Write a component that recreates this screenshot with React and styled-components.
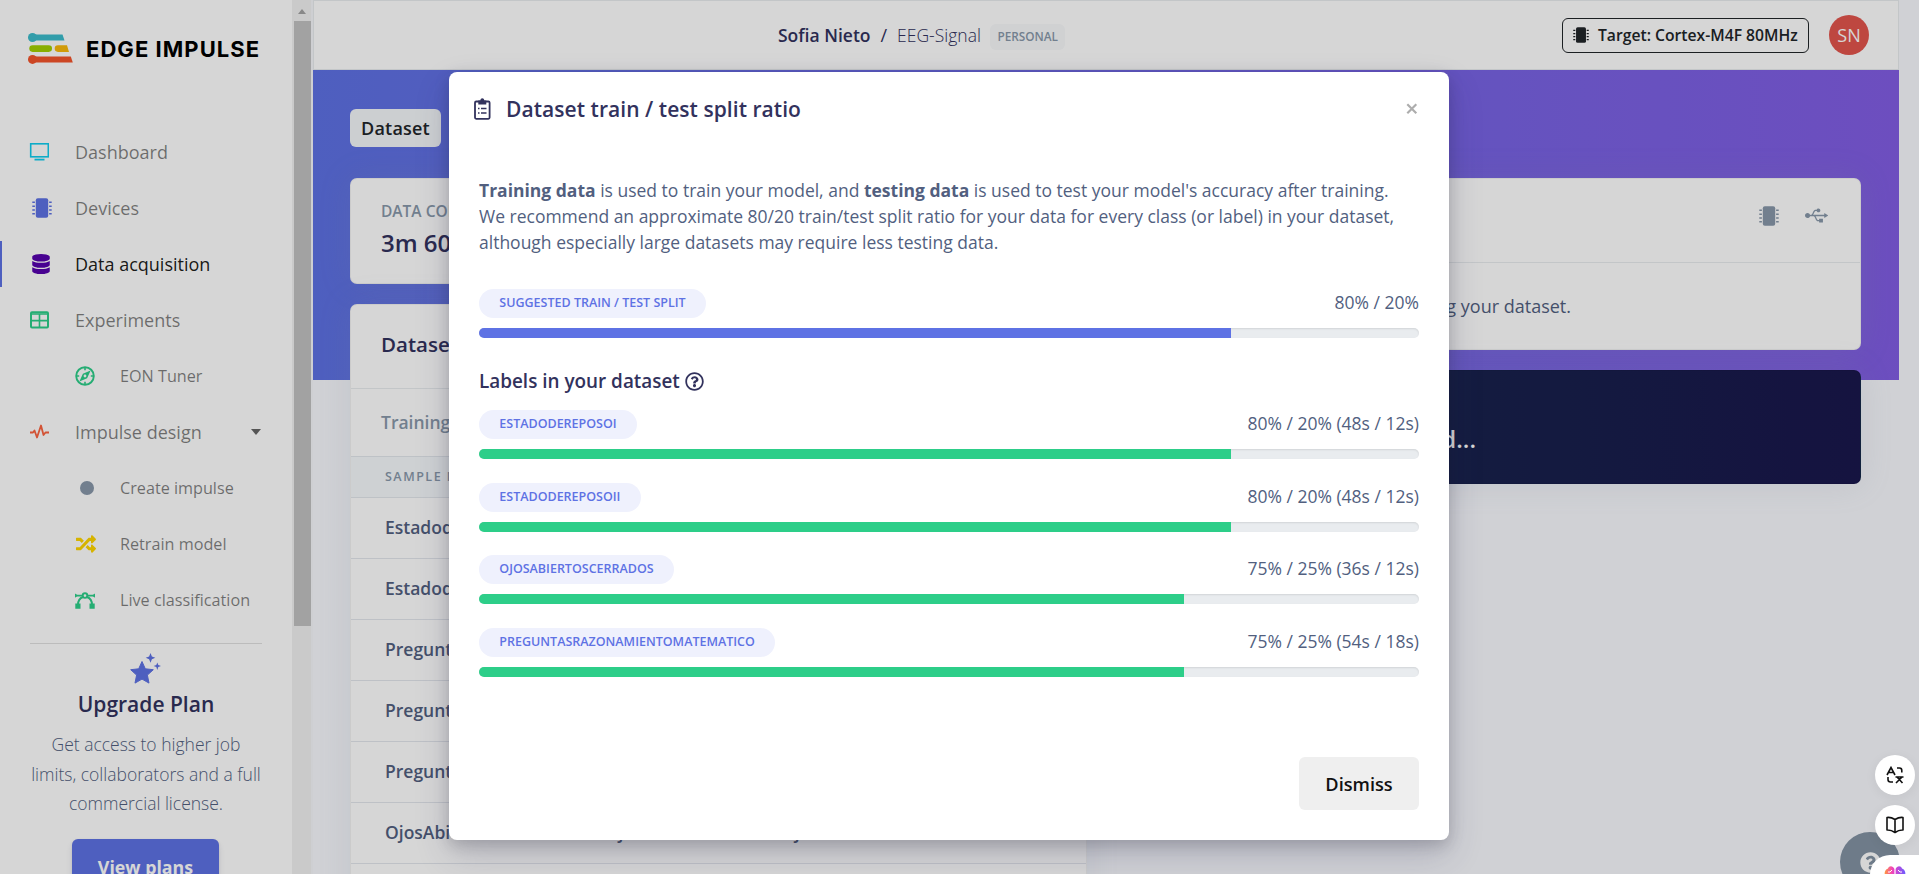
import React from "react";
import styled, { createGlobalStyle } from "styled-components";
import { FaDatabase, FaRandom, FaUsb, FaRegQuestionCircle, FaQuestionCircle } from "react-icons/fa";

const Global = createGlobalStyle`
  *, *::before, *::after { box-sizing: border-box; }
  body { margin: 0; overflow: hidden; background: #f8f9fe; font-family: "Open Sans", "Noto Sans", sans-serif; font-size: 18px; color: #525f7f; }
  svg { display: block; flex: none; }
`;

const Page = styled.div`
  position: relative;
  display: flex;
  height: 874px;
  overflow: hidden;
  white-space: nowrap;
`;

/* ---------- sidebar ---------- */
const Sidebar = styled.aside`
  width: 292px;
  height: 874px;
  background: #fff;
  display: flex;
  flex-direction: column;
  overflow: hidden;
  flex: none;
`;
const Brand = styled.div`
  display: flex;
  align-items: center;
  height: 97px;
  flex: none;
  padding: 0 0 0 28px;
  gap: 13px;
`;
const BrandName = styled.span`
  font-family: Inter, sans-serif;
  font-weight: 700;
  font-size: 22px;
  line-height: 30px;
  letter-spacing: 1.05px;
  color: #000;
`;
const Nav = styled.nav`
  flex: none;
  padding-top: 27px;
`;
const NavItem = styled.div`
  display: flex;
  align-items: center;
  height: 56px;
  padding-left: ${(p) => (p.$sub ? 74 : 29)}px;
  font-size: ${(p) => (p.$sub ? 16.2 : 18)}px;
  color: ${(p) => (p.$active ? "rgba(0,0,0,.9)" : "rgba(0,0,0,.5)")};
`;
const ActiveNavItem = styled(NavItem)`
  background: linear-gradient(#5e72e4, #5e72e4) 0 5px / 2px 46px no-repeat;
`;
const NavIcon = styled.span`
  display: flex;
  align-items: center;
  width: 46px;
  padding-left: ${(p) => p.$shift || 0}px;
  color: ${(p) => p.$color};
`;
const NavLabel = styled.span`
  flex: 1;
`;
const Caret = styled.span`
  margin-right: 31px;
  border: 5.5px solid transparent;
  border-top: 6px solid rgba(0, 0, 0, 0.6);
  border-bottom: 0;
`;
const Upgrade = styled.div`
  flex: none;
  margin: 15px 30px 0;
  border-top: 1px solid rgba(0, 0, 0, 0.12);
  display: flex;
  flex-direction: column;
  align-items: center;
  padding-top: 9px;
`;
const UpgradeTitle = styled.div`
  margin-top: 3px;
  font-size: 21px;
  font-weight: 600;
  line-height: 32px;
  color: #32325d;
`;
const UpgradeText = styled.p`
  margin: 10px -10px 0;
  font-weight: 300;
  font-size: 17.5px;
  line-height: 29.6px;
  text-align: center;
`;
const PlansButton = styled.button`
  margin: 20px 1px 0 0;
  width: 147px;
  height: 56px;
  flex: none;
  border: 0;
  border-radius: 6px;
  background: #5e72e4;
  color: #fff;
  font: 700 17.8px/54px "Open Sans", sans-serif;
  padding: 0;
  box-shadow: 0 4px 6px rgba(50, 50, 93, 0.11), 0 1px 3px rgba(0, 0, 0, 0.08);
`;

/* ---------- sidebar scrollbar ---------- */
const ScrollTrack = styled.div`
  width: 21px;
  height: 874px;
  flex: none;
  background: linear-gradient(90deg, #f1f1f1 19px, #f6f7fb 19px);
  padding: 9px 0 0 2px;
`;
const ScrollUp = styled.div`
  width: 0;
  margin-left: 4px;
  border: 4.5px solid transparent;
  border-bottom: 5px solid #a3a3a3;
  border-top: 0;
`;
const ScrollThumb = styled.div`
  width: 17px;
  height: 605px;
  margin-top: 7px;
  background: #c1c1c1;
`;

/* ---------- main ---------- */
const Main = styled.main`
  width: 1586px;
  flex: none;
  height: 874px;
  display: flex;
  flex-direction: column;
`;
const Header = styled.header`
  height: 70px;
  flex: none;
  background: #fff;
  border: 1px solid #e9ecef;
  display: flex;
  align-items: center;
  padding: 0 29px 0 464px;
  color: #32325d;
`;
const Owner = styled.span`
  font-weight: 600;
  font-size: 17.5px;
`;
const Slash = styled.span`
  margin: 0 10px 0 10px;
  font-weight: 500;
`;
const Project = styled.span`
  font-weight: 300;
  font-size: 17.5px;
`;
const Tag = styled.span`
  margin: 3px auto 0 9px;
  height: 26px;
  padding: 0 7.5px;
  border-radius: 6px;
  background: #f8fafb;
  color: #8898aa;
  font-size: 11.8px;
  font-weight: 600;
  line-height: 25px;
`;
const Target = styled.div`
  width: 247px;
  height: 35px;
  border: 1px solid #212529;
  border-radius: 6px;
  color: #212529;
  display: flex;
  align-items: center;
  gap: 9px;
  padding-left: 10px;
  font-size: 15.7px;
  font-weight: 600;
`;
const Avatar = styled.div`
  width: 40px;
  height: 40px;
  margin-left: 20px;
  border-radius: 50%;
  background: #e3554d;
  color: #fff;
  text-align: center;
  line-height: 41px;
  font-size: 18px;
`;
const Content = styled.div`
  flex: 1;
  padding: 39px 38px 0 37px;
  background: linear-gradient(87deg, #5e72e4 0, #825ee4 100%) 0 0 / 100% 310px no-repeat #f8f9fe;
`;
const Tab = styled.div`
  display: inline-block;
  height: 38px;
  width: 91px;
  border-radius: 6px;
  background: #f3f7f9;
  color: #212529;
  text-align: center;
  font-size: 18px;
  letter-spacing: 0.2px;
  font-weight: 600;
  line-height: 38px;
`;
const Columns = styled.div`
  display: grid;
  grid-template-columns: 737px 736px;
  gap: 38px;
  margin-top: 31px;
`;
const Column = styled.div`
  display: flex;
  flex-direction: column;
  gap: 20px;
`;
const StatRow = styled.div`
  display: grid;
  grid-template-columns: 1fr 1fr;
  gap: 20px;
`;
const Card = styled.section`
  background: #fff;
  border: 1px solid rgba(0, 0, 0, 0.05);
  border-radius: 7px;
  box-shadow: 0 0 32px rgba(136, 152, 170, 0.15);
`;
const StatCard = styled(Card)`
  height: 106px;
  padding: 17px 30px;
`;
const StatName = styled.div`
  color: #8898aa;
  font-size: 15.5px;
  font-weight: 600;
  line-height: 30px;
`;
const StatValue = styled.div`
  color: #32325d;
  font-size: 24px;
  font-weight: 600;
  line-height: 34px;
`;
const TableCard = styled(Card)`
  height: 620px;
`;
const CardTitle = styled.div`
  height: 84px;
  padding-left: 30px;
  border-bottom: 1px solid #e9ecef;
  color: #32325d;
  font-size: 20.5px;
  font-weight: 600;
  line-height: 78px;
`;
const SetTab = styled.div`
  height: 68px;
  padding-left: 30px;
  border-bottom: 1px solid #e3e8ec;
  color: #8898aa;
  font-weight: 600;
  font-size: 17.5px;
  line-height: 66px;
`;
const TableHead = styled.div`
  height: 41px;
  padding-left: 34px;
  background: #f6f9fc;
  border-bottom: 1px solid #e3e8ec;
  color: #8898aa;
  font-size: 12.5px;
  font-weight: 600;
  letter-spacing: 1.5px;
  line-height: 40px;
`;
const TableRow = styled.div`
  height: 61px;
  padding-left: 34px;
  border-bottom: 1px solid #e3e6ec;
  display: grid;
  grid-template-columns: 396px 1fr;
  font-size: 17.5px;
  font-weight: 600;
  line-height: 59px;
`;
const CollectCard = styled(Card)`
  height: 172px;
`;
const CollectHead = styled.div`
  height: 84px;
  border-bottom: 1px solid #e9ecef;
  display: flex;
  justify-content: flex-end;
  align-items: center;
  gap: 26px;
  padding: 0 32px 10px 0;
  color: #8898aa;
`;
const CollectText = styled.div`
  padding-right: 289px;
  text-align: right;
  line-height: 86px;
`;
const DarkCard = styled(Card)`
  height: 114px;
  background: linear-gradient(87deg, #172b4d, #1a174d);
  color: #fff;
  font-size: 24px;
  font-weight: 600;
  text-align: right;
  padding-right: 384px;
  line-height: 136px;
`;

/* ---------- overlays ---------- */
const HelpBubble = styled.div`
  position: absolute;
  left: 1840px;
  top: 832px;
  width: 60px;
  height: 60px;
  border-radius: 50%;
  background: #8393a4;
  color: #fff;
  display: flex;
  align-items: center;
  justify-content: center;
`;
const Backdrop = styled.div`
  position: absolute;
  inset: 0;
  background: rgba(0, 0, 0, 0.16);
`;
const Modal = styled.div`
  position: absolute;
  left: 449px;
  top: 72px;
  width: 1000px;
  height: 768px;
  background: #fff;
  border-radius: 8px;
  box-shadow: 0 15px 35px rgba(50, 50, 93, 0.2), 0 5px 15px rgba(0, 0, 0, 0.17);
  display: flex;
  flex-direction: column;
  padding: 0 30px 30px;
`;
const ModalHead = styled.div`
  display: flex;
  align-items: center;
  height: 75px;
  margin-left: -5px;
  padding: 0 1px 2px 0;
  color: #32325d;
`;
const ModalTitle = styled.h5`
  flex: 1;
  margin: 0 0 0 15px;
  font-size: 21px;
  font-weight: 600;
  letter-spacing: 0.05px;
`;
const Intro = styled.p`
  margin: 30px 0 34px;
  line-height: 26px;
  font-size: 17.5px;
`;
const Bold = styled.b`
  font-weight: 700;
`;
const Ratio = styled.div`
  height: 72.8px;
  flex: none;
`;
const RatioTop = styled.div`
  display: flex;
  justify-content: space-between;
  height: 29px;
  margin-bottom: 10px;
`;
const Chip = styled.span`
  height: 29px;
  padding: 0 20.3px;
  border-radius: 15px;
  background: #eff1fd;
  color: #5e72e4;
  font-size: 12.5px;
  font-weight: 600;
  line-height: 27px;
`;
const RatioValue = styled.span`
  font-size: 17.5px;
  line-height: 26px;
`;
const Track = styled.div`
  height: 10px;
  border-radius: 5px;
  overflow: hidden;
  background: #e9ecef;
  box-shadow: inset 0 1px 2px rgba(0, 0, 0, 0.1);
`;
const Fill = styled.div`
  height: 10px;
  width: ${(p) => p.$value}%;
  background: ${(p) => p.$color};
`;
const LabelsTitle = styled.div`
  display: flex;
  align-items: center;
  gap: 5px;
  height: 29px;
  margin: 5px 0 14px;
  color: #32325d;
  font-size: 18.9px;
  font-weight: 600;
`;
const Dismiss = styled.button`
  margin: auto 0 0 auto;
  width: 120px;
  height: 53px;
  border: 0;
  border-radius: 6px;
  background: #efefef;
  color: #111;
  font: 600 18.2px "Open Sans", sans-serif;
`;
const FloatDock = styled.div`
  position: absolute;
  right: 4px;
  top: 755px;
  display: flex;
  flex-direction: column;
  gap: 10px;
`;
const FloatButton = styled.div`
  width: 40px;
  height: 40px;
  border-radius: 50%;
  background: #fff;
  color: #111;
  display: flex;
  align-items: center;
  justify-content: center;
  box-shadow: 0 2px 12px rgba(0, 0, 0, 0.06);
`;
const Assistant = styled.div`
  position: absolute;
  left: 1870px;
  top: 855px;
  width: 60px;
  height: 40px;
  padding: 10px 0 0 14px;
  border-radius: 20px 0 0 20px;
  background: #fff;
`;

/* ---------- drawings ---------- */
const Logo = () => (
  <svg width="45" height="31" viewBox="0 0 45 31">
    <g fill="#3cbccb"><circle cx="4.5" cy="4.5" r="4.5" /><path d="M4 1.5h30.5l2 6H4z" /></g>
    <rect x="1.3" y="12.3" width="22.7" height="6.6" rx="3.3" fill="#a2d000" />
    <path d="M30 12.3h9l2 6.6H30a3.3 3.3 0 0 1 0-6.6z" fill="#fab90a" />
    <g fill="#f4542b"><circle cx="4.5" cy="26.4" r="4.5" /><path d="M4 23.4h38.8l2 6H4z" /></g>
  </svg>
);
const Monitor = () => (
  <svg width="20" height="18" viewBox="0 0 20 18" fill="none" stroke="currentColor">
    <rect x="1.7" y=".8" width="17.6" height="13" strokeWidth="1.6" />
    <path d="M5.500 16.600h10" strokeWidth="1.800" />
  </svg>
);
const Chipset = ({ size = 20 }) => (
  <svg width={size} height={size} viewBox="0 0 20 20" fill="currentColor">
    <rect x="3.8" y=".2" width="12.4" height="19.6" rx="2" />
    {[4.3, 8.2, 12, 15.8].map((y) => (
      <path key={y} d={`M.3 ${y}h2.6M17.1 ${y}h2.6`} stroke="currentColor" strokeWidth="1.5" />
    ))}
  </svg>
);
const Grid = () => (
  <svg width="20" height="18" viewBox="0 0 20 18" fill="none" stroke="currentColor">
    <rect x="2" y="1.200" width="17" height="15.400" rx="1" strokeWidth="2" />
    <path d="M2 3h17M10.500 3v13M2 9.600h17" strokeWidth="1.600" />
  </svg>
);
const Compass = () => (
  <svg width="20" height="20" viewBox="0 0 20 20" fill="none" stroke="currentColor">
    <circle cx="10" cy="10" r="8.8" strokeWidth="1.9" />
    <path d="M10 1v3.200M10 15.800v3M1 10h3.200M15.800 10h3" strokeWidth="1.600" />
    <path fillRule="evenodd" d="M15.600 4.400l-3.500 7.800-7.700 3.400 3.500-7.800zM10 8.600a1.400 1.400 0 1 0 0 2.800 1.400 1.400 0 0 0 0-2.800z" fill="currentColor" stroke="none" />
  </svg>
);
const Pulse = () => (
  <svg width="20" height="16" viewBox="0 0 20 16" fill="none" stroke="currentColor" strokeWidth="1.8" strokeLinejoin="round">
    <path d="M1 8.500h3l1.500-2 2.500 7L12 1.500l2.500 9.500 2-2.500H20" />
  </svg>
);
const Curve = () => (
  <svg width="20" height="17" viewBox="0 0 20 17" fill="none" stroke="currentColor">
    <circle cx="10" cy="3.600" r="2.300" strokeWidth="1.900" />
    <path d="M0 3.600h7.500M12.500 3.600H20" strokeWidth="1.700" />
    <path d="M3 13c0-5 2-7 5-8M17 13c0-5-2-7-5-8" strokeWidth="2" />
    <path d="M.3 11.500h5.200v5.200H.3zM14.500 11.500h5.200v5.200h-5.200zM0 1.500l3 2.100-3 2.100zM20 1.500l-3 2.100 3 2.100z" fill="currentColor" stroke="none" />
  </svg>
);
const Stars = () => (
  <svg width="32" height="32" viewBox="0 0 32 32" fill="#5e72e4">
    <path d="M12 8.500l3.300 7.300 8 .9-5.900 5.400 1.600 8-7-4-7 4 1.600-8L.7 16.700l8-.9z" strokeLinejoin="round" stroke="#5e72e4" />
    <path d="M20.500 0l1.400 3.400 3.400 1.400-3.400 1.400-1.400 3.600-1.400-3.600-3.400-1.400 3.400-1.400zM27.300 9.400l1 2.700 2.700 1-2.700 1-1 2.900-1-2.900-2.700-1 2.700-1z" />
  </svg>
);
const Clipboard = () => (
  <svg width="17" height="22" viewBox="0 0 17 22" fill="none" stroke="currentColor">
    <rect x="1" y="3.500" width="14.600" height="17.300" rx="1.200" strokeWidth="1.800" />
    <path d="M4.300 2.500h2C6.500 1 7.300.3 8.300.3s1.800.7 2 2.200h2v4h-8z" fill="currentColor" stroke="none" />
    <path d="M4 10.500h1.500M7 10.500h5.500M4 15h1.500M7 15h5.500" strokeWidth="1.400" />
  </svg>
);
const Translate = () => (
  <svg width="18" height="18" viewBox="0 0 18 18" fill="none" stroke="currentColor" strokeWidth="1.600">
    <path d="M1 9L5 1.500 9 9M2.500 6.500h5M11 2h2.500q2.300 0 2.300 2.500v2M2 11v2.500Q2 16 4.500 16H7M9.500 11h8M11 11l5.500 6M16 11l-6 6" />
  </svg>
);
const Book = () => (
  <svg width="18" height="18" viewBox="0 0 18 18" fill="none" stroke="currentColor" strokeWidth="1.600" strokeLinejoin="round">
    <path d="M9 3.500Q5 1 1 1.500V14q4-.3 8 2.500 4-2.800 8-2.500V1.500q-4-.5-8 2V16.500" />
  </svg>
);
const Brain = () => (
  <svg width="22" height="20" viewBox="0 0 22 20">
    <defs>
      <linearGradient id="brain">
        <stop offset="0" stopColor="#ff9a3c" /><stop offset=".4" stopColor="#f03fc2" /><stop offset="1" stopColor="#6a5cff" />
      </linearGradient>
    </defs>
    <path d="M10.400 4C9 .4 5 .4 4 3.500 1 4.500 0 8 1 11v9h9.400zM11.600 4C13 .4 17 .4 18 3.500c3 1 4 4.500 3 7.500v9h-9.400z" fill="url(#brain)" />
    <path d="M4 7q2 1 4-2M18 7q-2 1-4-2" stroke="#fff" fill="none" />
  </svg>
);
const Dot = styled.span`
  width: 14px;
  height: 14px;
  margin-left: 6px;
  border-radius: 50%;
  background: currentColor;
`;
const Cross = () => (
  <svg width="12" height="12" viewBox="0 0 12 12" stroke="#adadad" strokeWidth="2.200">
    <path d="M1.300 1.300l9 9M10.300 1.300l-9 9" />
  </svg>
);

const NAV = [
  { label: "Dashboard", color: "#11cdef", icon: <Monitor /> },
  { label: "Devices", color: "#5e72e4", icon: <Chipset />, shift: 2.5 },
  { label: "Data acquisition", color: "#5603ad", icon: <FaDatabase size={20} />, shift: 1.5, active: true },
  { label: "Experiments", color: "#2dce89", icon: <Grid /> },
  { label: "EON Tuner", color: "#2dce89", icon: <Compass />, shift: 0.5, sub: true },
  { label: "Impulse design", color: "#fb6340", icon: <Pulse />, caret: true },
  { label: "Create impulse", color: "#8898aa", icon: <Dot />, sub: true },
  { label: "Retrain model", color: "#ffd600", icon: <FaRandom size={20} />, shift: 2, sub: true },
  { label: "Live classification", color: "#2dce89", icon: <Curve />, shift: 0.5, sub: true },
];
const SAMPLES = [
  ["Estadode.2", "EstadodeReposoII"],
  ["Estadode.1", "EstadodeReposoI"],
  ["Preguntas", "Preguntas"],
  ["Preguntas", "Preguntas"],
  ["Preguntas", "Preguntas"],
  ["OjosAbiertosCerrados.s042.json", "OjosAbiertosCerrados"],
  ["", ""],
];
const LABELS = [
  ["ESTADODEREPOSOI", 80, "80% / 20% (48s / 12s)"],
  ["ESTADODEREPOSOII", 80, "80% / 20% (48s / 12s)"],
  ["OJOSABIERTOSCERRADOS", 75, "75% / 25% (36s / 12s)"],
  ["PREGUNTASRAZONAMIENTOMATEMATICO", 75, "75% / 25% (54s / 18s)"],
];

const RatioBar = ({ name, value, text, color }) => (
  <Ratio>
    <RatioTop>
      <Chip>{name}</Chip>
      <RatioValue>{text}</RatioValue>
    </RatioTop>
    <Track><Fill $value={value} $color={color} /></Track>
  </Ratio>
);

export default function App() {
  return (
    <Page>
      <Global />
      <Sidebar>
        <Brand><Logo /><BrandName>EDGE IMPULSE</BrandName></Brand>
        <Nav>
          {NAV.map((n) => {
            const Item = n.active ? ActiveNavItem : NavItem;
            return (
              <Item key={n.label} $sub={n.sub} $active={n.active}>
                <NavIcon $shift={n.shift} $color={n.color}>{n.icon}</NavIcon>
                <NavLabel>{n.label}</NavLabel>
                {n.caret && <Caret />}
              </Item>
            );
          })}
        </Nav>
        <Upgrade>
          <Stars />
          <UpgradeTitle>Upgrade Plan</UpgradeTitle>
          <UpgradeText>Get access to higher job<br />limits, collaborators and a full<br />commercial license.</UpgradeText>
          <PlansButton>View plans</PlansButton>
        </Upgrade>
      </Sidebar>
      <ScrollTrack><ScrollUp /><ScrollThumb /></ScrollTrack>
      <Main>
        <Header>
          <Owner>Sofia Nieto</Owner><Slash>/</Slash><Project>EEG-Signal</Project><Tag>PERSONAL</Tag>
          <Target><Chipset size={16} />Target: Cortex-M4F 80MHz</Target>
          <Avatar>SN</Avatar>
        </Header>
        <Content>
          <Tab>Dataset</Tab>
          <Columns>
            <Column>
              <StatRow>
                <StatCard><StatName>DATA COLLECTED</StatName><StatValue>3m 60s</StatValue></StatCard>
                <StatCard />
              </StatRow>
              <TableCard>
                <CardTitle>Dataset</CardTitle>
                <SetTab>Training</SetTab>
                <TableHead>SAMPLE NAME</TableHead>
                {SAMPLES.map(([name, label], i) => (
                  <TableRow key={i}><span>{name}</span><span>{label}</span></TableRow>
                ))}
              </TableCard>
            </Column>
            <Column>
              <CollectCard>
                <CollectHead><Chipset size={20} /><FaUsb size={23} /></CollectHead>
                <CollectText>using your dataset.</CollectText>
              </CollectCard>
              <DarkCard>Load...</DarkCard>
            </Column>
          </Columns>
        </Content>
      </Main>
      <HelpBubble><FaQuestionCircle size={21} /></HelpBubble>
      <Backdrop />
      <Modal>
        <ModalHead><Clipboard /><ModalTitle>Dataset train / test split ratio</ModalTitle><Cross /></ModalHead>
        <Intro>
          <Bold>Training data</Bold> is used to train your model, and <Bold>testing data</Bold> is used to test your model's accuracy after training.<br />
          We recommend an approximate 80/20 train/test split ratio for your data for every class (or label) in your dataset,<br />
          although especially large datasets may require less testing data.
        </Intro>
        <RatioBar name="SUGGESTED TRAIN / TEST SPLIT" value={80} text="80% / 20%" color="#5e72e4" />
        <LabelsTitle>Labels in your dataset <FaRegQuestionCircle size={19} /></LabelsTitle>
        {LABELS.map(([name, value, text]) => (
          <RatioBar key={name} name={name} value={value} text={text} color="#2dce89" />
        ))}
        <Dismiss>Dismiss</Dismiss>
      </Modal>
      <FloatDock>
        <FloatButton><Translate /></FloatButton>
        <FloatButton><Book /></FloatButton>
      </FloatDock>
      <Assistant><Brain /></Assistant>
    </Page>
  );
}
